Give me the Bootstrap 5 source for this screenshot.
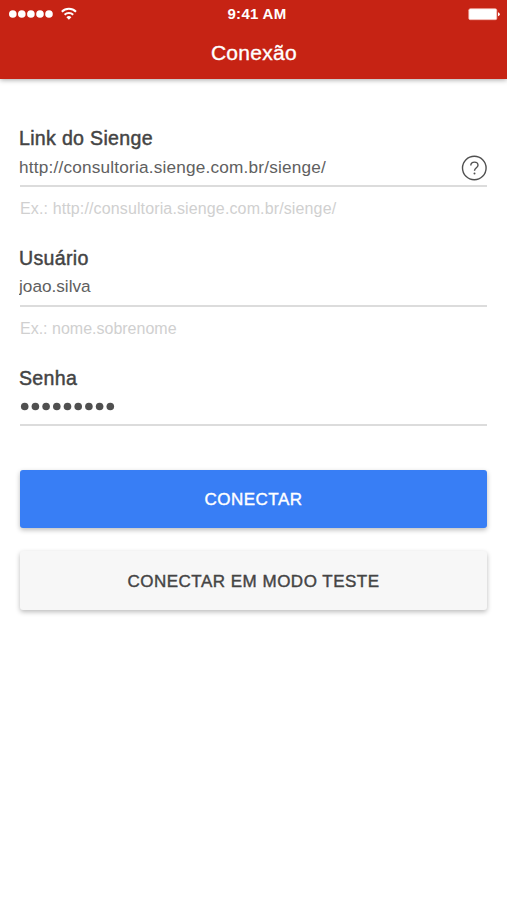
<!DOCTYPE html>
<html lang="pt-BR">
<head>
<meta charset="utf-8">
<meta name="viewport" content="width=device-width, initial-scale=1">
<title>Conexão</title>
<link href="https://cdn.jsdelivr.net/npm/bootstrap@5.3.0/dist/css/bootstrap.min.css" rel="stylesheet">
<style>
body{font-family:"Liberation Sans",Arial,sans-serif;color:#444;background:#fff;min-height:900px}
.top-bar{height:79px;background:#c62314;color:#fff;box-shadow:0 1px 5px rgba(0,0,0,.35)}
.status{height:27px;padding:0 7px 0 8px}
.status>*{flex:1 1 0}
.clock{font-size:15px;letter-spacing:.3px;line-height:27px;font-weight:700;white-space:nowrap;padding-left:6px}
.screen-title{font-size:21px;letter-spacing:.3px;line-height:51px;-webkit-text-stroke:.35px #fff;padding-left:1px}
.login{padding:46px 20px 0}
.entry{height:119.5px}
.entry-label{font-size:19.6px;letter-spacing:.3px;line-height:27px;height:26px;-webkit-text-stroke:.45px #444;display:block;margin-left:-1px}
.entry-last{line-height:28px}
.entry-box{height:36px;border-bottom:2px solid #dcdcdc}
.entry-box .form-control{font-size:17.2px;line-height:24px;height:32px;color:#606060;border-radius:0;margin-left:-1px}
.entry-box .url-text{letter-spacing:.2px}
.hint{font-size:16px;line-height:20px;color:#d0d0d0;padding:12px 0 0 0}
.hint-url{letter-spacing:.13px}
.action{height:58px;font-size:17px;letter-spacing:.5px;padding:8px 0 6px;border:0;border-radius:3px;box-shadow:0 2px 5px rgba(0,0,0,.27)}
.action-main,.action-main:hover{background:#387ef5;color:#fff;-webkit-text-stroke:.4px #fff}
.action-test,.action-test:hover{height:59px;background:#f7f7f7;color:#444;-webkit-text-stroke:.4px #444}
.actions{padding-top:44px;gap:23px}
</style>
</head>
<body>
<header class="top-bar">
  <div class="status d-flex align-items-center">
    <div class="d-flex align-items-center">
      <svg width="72" height="20" viewBox="8 4 72 20" fill="#fff" aria-hidden="true">
        <circle cx="12.8" cy="14" r="3.8"/><circle cx="21.8" cy="14" r="3.8"/><circle cx="30.9" cy="14" r="3.8"/><circle cx="40" cy="14" r="3.8"/><circle cx="49" cy="14" r="3.8"/>
        <path d="M61.8 11.7a10.2 10.2 0 0 1 14.2 0M64.6 14.8a6.2 6.2 0 0 1 8.6 0" fill="none" stroke="#fff" stroke-width="2"/>
        <path d="M66.4 17.2a3.8 3.8 0 0 1 5 0L68.9 19.8z"/>
      </svg>
    </div>
    <div class="clock text-center">9:41 AM</div>
    <div class="d-flex justify-content-end">
      <svg width="33" height="14" viewBox="0 0 33 14" aria-hidden="true"><rect x="1.8" y="1.7" width="28" height="11" rx="1.5" fill="#fff" stroke="#f5b5ae" stroke-width=".7"/><path d="M31 5.2q1.8.3 1.8 2t-1.8 2z" fill="#fff"/></svg>
    </div>
  </div>
  <h1 class="screen-title text-center fw-normal m-0">Conexão</h1>
</header>
<main class="login">
  <form>
    <div class="entry">
      <label class="entry-label" for="link">Link do Sienge</label>
      <div class="entry-box d-flex">
        <input id="link" class="form-control url-text border-0 bg-transparent p-0 shadow-none" type="text" value="http://consultoria.sienge.com.br/sienge/">
        <svg class="flex-shrink-0 mt-1" width="26" height="26" viewBox="0 0 26 26" fill="none" stroke="#505050" stroke-width="1.4" aria-label="Ajuda"><circle cx="13.3" cy="13" r="11.8"/><path d="M9.8 10.4C9.8 8.4 11.2 7.1 13.4 7.1s3.6 1.2 3.6 3.1c0 2.5-3.5 2.7-3.5 5.6"/><circle cx="13.5" cy="18.4" r="1" fill="#505050" stroke="none"/></svg>
      </div>
      <div class="hint hint-url">Ex.: http://consultoria.sienge.com.br/sienge/</div>
    </div>
    <div class="entry">
      <label class="entry-label" for="user">Usuário</label>
      <div class="entry-box"><input id="user" class="form-control border-0 bg-transparent p-0 shadow-none" type="text" value="joao.silva"></div>
      <div class="hint">Ex.: nome.sobrenome</div>
    </div>
    <div>
      <div class="entry-label entry-last">Senha</div>
      <div class="entry-box">
        <svg class="d-block" width="100" height="32" fill="#505050" role="img" aria-label="Senha oculta"><circle cx="4.7" cy="16.5" r="3.8"/><circle cx="15.4" cy="16.5" r="3.8"/><circle cx="26.1" cy="16.5" r="3.8"/><circle cx="36.8" cy="16.5" r="3.8"/><circle cx="47.5" cy="16.5" r="3.8"/><circle cx="58.2" cy="16.5" r="3.8"/><circle cx="68.9" cy="16.5" r="3.8"/><circle cx="79.6" cy="16.5" r="3.8"/><circle cx="90.3" cy="16.5" r="3.8"/></svg>
      </div>
    </div>
    <div class="actions d-grid">
      <button class="btn action action-main" type="button">CONECTAR</button>
      <button class="btn action action-test" type="button">CONECTAR EM MODO TESTE</button>
    </div>
  </form>
</main>
<script src="https://cdn.jsdelivr.net/npm/bootstrap@5.3.0/dist/js/bootstrap.bundle.min.js"></script>
</body>
</html>
